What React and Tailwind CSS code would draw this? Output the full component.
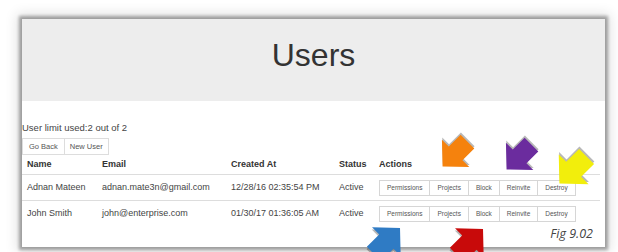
const users = [
  { name: "Adnan Mateen", email: "adnan.mate3n@gmail.com", created: "12/28/16 02:35:54 PM", status: "Active" },
  { name: "John Smith", email: "john@enterprise.com", created: "01/30/17 01:36:05 AM", status: "Active" },
]

const actions = ["Permissions", "Projects", "Block", "Reinvite", "Destroy"]

const ARROW = "50,10 94,52 72,52 72,90 28,90 28,52 6,52"

function Arrow({ color, rotate, className }) {
  return (
    <svg viewBox="0 0 100 100" className={className}>
      <g transform={`rotate(${rotate} 50 50)`}>
        <polygon points={ARROW} fill="rgba(0,0,0,0.28)" transform="translate(3 4)" />
        <polygon points={ARROW} fill={color} />
      </g>
    </svg>
  )
}

export default function App() {
  return (
    <div className="relative w-[618px] h-[252px] bg-white overflow-hidden font-['Liberation_Sans',Arial,sans-serif]">
      <div className="pt-[19px] pl-[22px]">
        <div className="w-[583px] h-[228px] bg-white flex flex-col shadow-[0_0_3px_3px_rgba(0,0,0,0.32),0_0_12px_5px_rgba(0,0,0,0.12)]">
          <div className="h-[82px] bg-[#ededed] flex items-center justify-center pb-[10px] shrink-0">
            <h1 className="text-[32px] leading-none text-[#333]">Users</h1>
          </div>

          <div className="pr-[5px]">
            <p className="mt-[21px] text-[9.5px] leading-[12px] text-[#444]">User limit used:2 out of 2</p>
            <div className="mt-[4px] flex">
              <button className="h-[17px] px-[6px] text-[7.5px] text-[#555] bg-white border border-[#ddd]">Go Back</button>
              <button className="h-[17px] px-[5px] text-[7.5px] text-[#555] bg-white border border-l-0 border-[#ddd]">New User</button>
            </div>

            <div className="grid grid-cols-[75px_129px_108px_40px_1fr] h-[20px] items-center border-b border-[#ddd] text-[9px] font-bold text-[#333]">
              <div className="pl-[5px]">Name</div>
              <div className="pl-[5px]">Email</div>
              <div className="pl-[5px]">Created At</div>
              <div className="pl-[5px]">Status</div>
              <div className="pl-[5px]">Actions</div>
            </div>

            {users.map((u, i) => (
              <div key={u.name} className={`grid grid-cols-[75px_129px_108px_40px_1fr] h-[26px] items-center text-[9px] text-[#444] ${i === 0 ? "border-b border-[#ddd]" : ""}`}>
                <div className="pl-[5px] whitespace-nowrap">{u.name}</div>
                <div className="pl-[5px] whitespace-nowrap">{u.email}</div>
                <div className="pl-[5px] whitespace-nowrap">{u.created}</div>
                <div className="pl-[5px]">{u.status}</div>
                <div className="pl-[5px] flex">
                  {actions.map((a, j) => (
                    <button key={a} className={`h-[16px] px-[7px] text-[6.5px] text-[#555] bg-white border border-[#d6d6d6] ${j > 0 ? "border-l-0" : ""}`}>
                      {a}
                    </button>
                  ))}
                </div>
              </div>
            ))}

            <div className="flex justify-end pr-[7px]">
              <span className="text-[12.5px] leading-[14px] italic text-[#444] font-['Open_Sans',sans-serif]">Fig 9.02</span>
            </div>
          </div>
        </div>
      </div>

      <Arrow color="#f5820d" rotate={225} className="absolute left-[433px] top-[132px] w-[44px] h-[44px]" />
      <Arrow color="#6b2c9e" rotate={225} className="absolute left-[497px] top-[135px] w-[44px] h-[44px]" />
      <Arrow color="#f2ee0c" rotate={225} className="absolute left-[549px] top-[146px] w-[48px] h-[48px]" />
      <Arrow color="#2f7bc4" rotate={45} className="absolute left-[364px] top-[218px] w-[46px] h-[46px]" />
      <Arrow color="#c80a0a" rotate={45} className="absolute left-[447px] top-[219px] w-[46px] h-[46px]" />
    </div>
  )
}
